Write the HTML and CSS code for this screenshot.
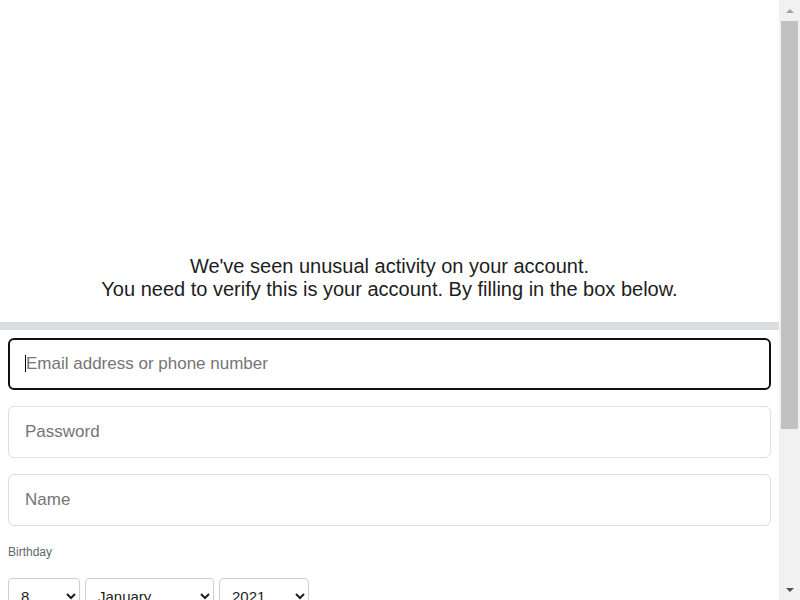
FILE: index.html
```html
<!DOCTYPE html>
<html lang="en">
<head>
<meta charset="utf-8">
<title>Verify account</title>
<link rel="stylesheet" href="styles.css">
</head>
<body>
<div class="page">
  <div class="hero"></div>
  <p class="notice">We've seen unusual activity on your account.<br>You need to verify this is your account. By filling in the box below.</p>
  <div class="divider"></div>
  <div class="form">
    <div class="field-wrap">
      <input class="field field-active" type="text" placeholder="Email address or phone number">
      <span class="caret"></span>
    </div>
    <input class="field" type="password" placeholder="Password">
    <input class="field" type="text" placeholder="Name">
    <div class="label">Birthday</div>
    <div class="selects">
      <select class="sel sel-day"><option>8</option></select>
      <select class="sel sel-month"><option>January</option></select>
      <select class="sel sel-year"><option>2021</option></select>
    </div>
    <div class="spacer"></div>
  </div>
</div>
<div class="scrollbar">
  <div class="sb-btn sb-up"><span class="tri tri-up"></span></div>
  <div class="sb-track"><div class="sb-thumb"></div></div>
  <div class="sb-btn sb-down"><span class="tri tri-down"></span></div>
</div>
</body>
</html>
```
FILE: styles.css
```css
html, body {
  margin: 0;
  padding: 0;
  background: #ffffff;
}
body {
  font-family: "Liberation Sans", Arial, sans-serif;
  color: #1c1e21;
}
.page {
  margin-right: 21px;
}
.hero {
  height: 255px;
}
.notice {
  margin: 0;
  text-align: center;
  font-size: 20px;
  line-height: 23px;
  color: #1c1e21;
}
.divider {
  margin-top: 21px;
  height: 8px;
  background: #dadde1;
}
.form {
  padding: 8px 8px 0 8px;
  display: flex;
  flex-direction: column;
}
.field-wrap {
  position: relative;
}
.field {
  box-sizing: border-box;
  height: 52px;
  width: 100%;
  margin: 0 0 16px 0;
  padding: 0 16px;
  border: 1px solid #dddfe2;
  border-radius: 6px;
  font-family: "Liberation Sans", Arial, sans-serif;
  font-size: 17px;
  color: #1c1e21;
  background: #fff;
  outline: none;
  display: block;
}
.field::placeholder {
  color: #757575;
}
.field-active {
  border: 2px solid #111111;
}
.caret {
  position: absolute;
  left: 17px;
  top: 17px;
  width: 1px;
  height: 17px;
  background: #000;
}
.label {
  margin-top: 3px;
  font-size: 12px;
  line-height: 14px;
  color: #606770;
}
.selects {
  display: flex;
  gap: 5px;
  margin-top: 19px;
}
.sel {
  box-sizing: border-box;
  height: 36px;
  border: 1px solid #ccd0d5;
  border-radius: 4px;
  background: #fff;
  font-family: "Liberation Sans", Arial, sans-serif;
  font-size: 15px;
  color: #1c1e21;
  padding: 0 6px 0 8px;
}
.sel-day { width: 72px; }
.sel-month { width: 129px; }
.sel-year { width: 90px; }
.spacer {
  height: 300px;
}
.scrollbar {
  position: fixed;
  top: 0;
  right: 0;
  width: 21px;
  height: 100%;
  background: #f1f1f1;
  display: flex;
  flex-direction: column;
}
.sb-btn {
  height: 21px;
  display: flex;
  align-items: center;
  justify-content: center;
  flex: none;
}
.sb-track {
  flex: 1;
  padding: 0 2px;
}
.sb-thumb {
  height: 408px;
  background: #c1c1c1;
}
.tri {
  width: 0;
  height: 0;
  border-left: 4px solid transparent;
  border-right: 4px solid transparent;
}
.tri-up {
  border-bottom: 4px solid #a3a3a3;
}
.tri-down {
  border-top: 4px solid #505050;
}
```
